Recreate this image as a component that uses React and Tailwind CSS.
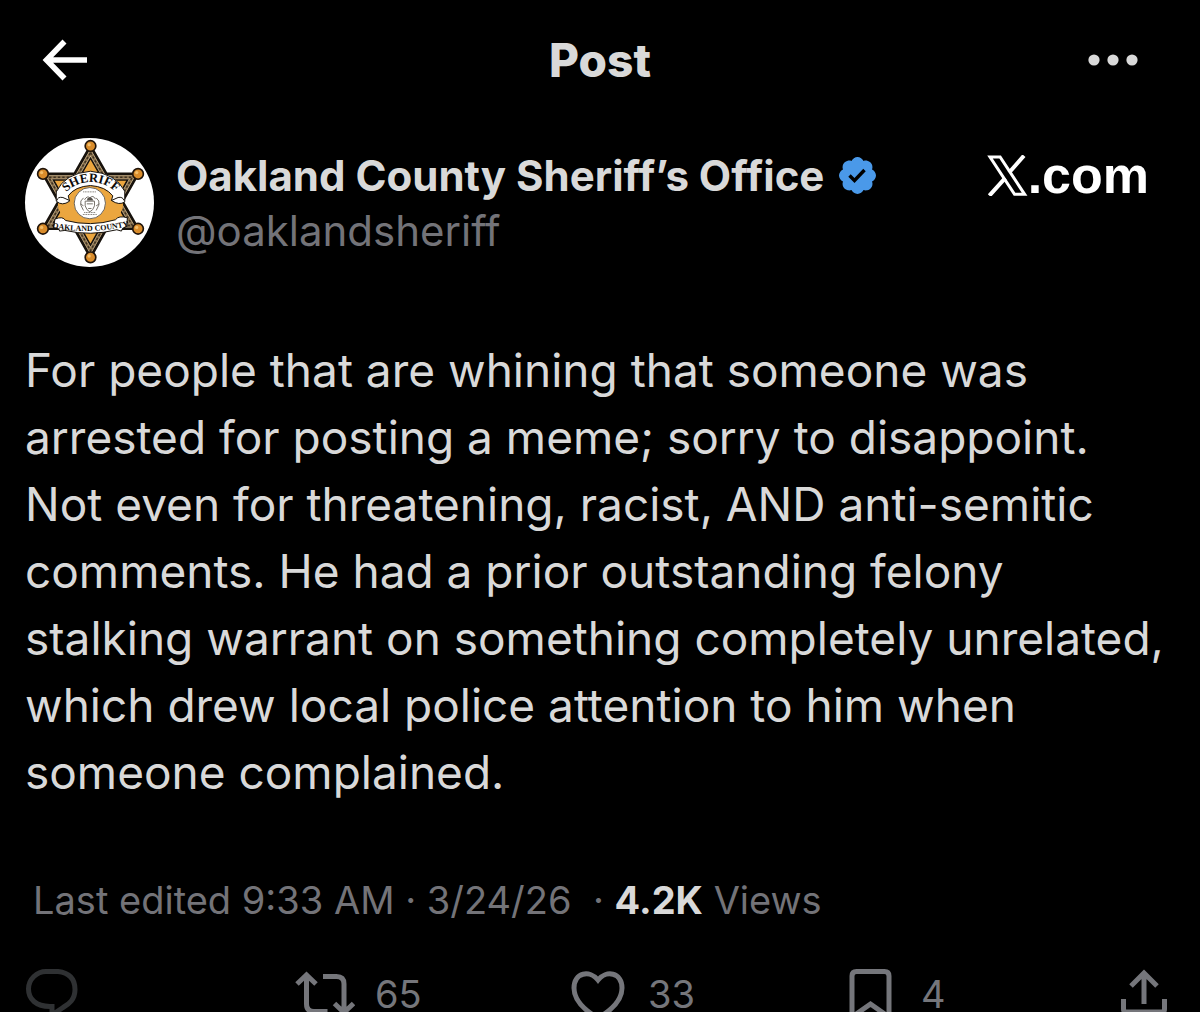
import clsx from 'clsx'

const POST = {
  name: 'Oakland County Sheriff’s Office',
  handle: '@oaklandsheriff',
  body: 'For people that are whining that someone was arrested for posting a meme; sorry to disappoint. Not even for threatening, racist, AND anti-semitic comments. He had a prior outstanding felony stalking warrant on something completely unrelated, which drew local police attention to him when someone complained.',
}

const STAR =
  '225,48 273,132 368,132 321,215 368,297 273,297 225,383 177,297 82,297 129,215 82,132 177,132'

const STAR_TIPS = [
  [225, 48],
  [368, 132],
  [368, 297],
  [225, 383],
  [82, 297],
  [82, 132],
]

function SheriffBadge() {
  return (
    <svg viewBox="28 24 388 388" className="size-[129px] shrink-0 rounded-full bg-white" role="img" aria-label="Sheriff badge">
      <defs>
        <path id="arc-top" d="M138 202 A108 108 0 0 1 314 202" />
        <path id="arc-bottom" d="M100 293 Q225 318 350 286" />
      </defs>
      <polygon points={STAR} fill="#dcc39a" stroke="#17120c" strokeWidth="8" strokeLinejoin="round" />
      <g transform="translate(225 215) scale(0.88) translate(-225 -215)">
        <polygon points={STAR} fill="none" stroke="#8a7350" strokeWidth="10" />
        <polygon points={STAR} fill="none" stroke="#3d3020" strokeWidth="5" strokeDasharray="8 7" />
      </g>
      <g transform="translate(225 215) scale(0.78) translate(-225 -215)">
        <polygon points={STAR} fill="#eba63f" stroke="#17120c" strokeWidth="6" />
      </g>
      <ellipse cx="225" cy="225" rx="98" ry="62" fill="#eba63f" />
      <path
        d="M122 186 Q148 130 225 124 Q300 130 328 184 L328 216 Q312 228 288 212 L292 198 Q270 170 225 167 Q178 170 158 198 L162 214 Q140 230 122 214 Z"
        fill="#fff"
        stroke="#17120c"
        strokeWidth="3"
      />
      <path d="M124 212 Q126 200 142 203 L162 212 M326 212 Q322 200 308 203 L288 212" fill="none" stroke="#17120c" strokeWidth="3" />
      <path
        d="M118 268 Q142 258 150 272 Q225 292 300 270 Q310 256 336 264 L334 290 Q318 294 318 304 L304 300 Q225 320 148 302 L132 304 Q132 294 114 294 Z"
        fill="#fff"
        stroke="#17120c"
        strokeWidth="3"
      />
      <circle cx="223" cy="220" r="47" fill="#fff" stroke="#6b6459" strokeWidth="3" />
      <g fill="none" stroke="#77736c" strokeWidth="3">
        <path d="M203 186h40M202 254h42M206 248h34" strokeDasharray="3 2" />
        <path d="M207 210q8-14 16-6q10-10 17 4M209 214h28v14q-4 14-14 18q-10-4-14-18zM214 222h18M218 236h10" />
        <path d="M204 204q-12 8-8 22l8 16M242 204q12 8 8 22l-8 16M194 222l10 6M252 222l-10 6" />
      </g>
      <path d="M216 206q8-8 14 0l4 6h-20z" fill="#55514b" />
      <g fill="#0d0b09" fontWeight="700" fontFamily='"Liberation Serif", serif' textAnchor="middle">
        <text fontSize="38">
          <textPath href="#arc-top" startOffset="50%">SHERIFF</textPath>
        </text>
        <text fontSize="24">
          <textPath href="#arc-bottom" startOffset="50%">OAKLAND COUNTY</textPath>
        </text>
      </g>
      {STAR_TIPS.map(([cx, cy]) => (
        <g key={`${cx}-${cy}`}>
          <circle cx={cx} cy={cy} r="16" fill="#d98c2b" stroke="#20140a" strokeWidth="5" />
          <circle cx={cx - 4} cy={cy - 4} r="5" fill="#f3bd68" />
        </g>
      ))}
    </svg>
  )
}

function VerifiedIcon() {
  return (
    <svg viewBox="0 0 37 37" className="size-[37px] shrink-0" role="img" aria-label="Verified account">
      <g transform="scale(1.968) translate(-1.6 -1.6)">
        <path
          fill="#4a99e9"
          d="M20.396 11c-.018-.646-.215-1.275-.57-1.816-.354-.54-.852-.972-1.438-1.246.223-.607.27-1.264.14-1.897-.131-.634-.437-1.218-.882-1.687-.47-.445-1.053-.75-1.687-.882-.633-.13-1.29-.083-1.897.14-.273-.587-.704-1.086-1.245-1.44S11.647 1.62 11 1.604c-.646.017-1.273.213-1.813.568s-.969.854-1.24 1.44c-.608-.223-1.267-.272-1.902-.14-.635.13-1.22.436-1.69.882-.445.47-.749 1.055-.878 1.688-.13.633-.08 1.29.144 1.896-.587.274-1.087.705-1.443 1.245-.356.54-.555 1.17-.574 1.817.02.647.218 1.276.574 1.817.356.54.856.972 1.443 1.245-.224.606-.274 1.263-.144 1.896.13.634.433 1.218.877 1.688.47.443 1.054.747 1.687.878.633.132 1.29.084 1.897-.136.274.586.705 1.084 1.246 1.439.54.354 1.17.551 1.816.569.647-.016 1.276-.213 1.817-.567s.972-.854 1.245-1.44c.604.239 1.266.296 1.903.164.636-.132 1.22-.447 1.68-.907.46-.46.776-1.044.908-1.681s.075-1.299-.165-1.903c.586-.274 1.084-.705 1.439-1.246.354-.54.551-1.17.569-1.816z"
        />
      </g>
      <path d="M10.500 18.500l5 5L25.500 13" fill="none" stroke="#000" strokeWidth="3.4" />
    </svg>
  )
}

function Action({ label, count, className, children }) {
  return (
    <button type="button" aria-label={label} className={clsx('flex h-[60px] items-center', className)}>
      <svg viewBox="0 0 60 60" className="size-[60px] shrink-0" fill="none" stroke="currentColor" strokeWidth="5" aria-hidden>
        {children}
      </svg>
      {count && <span className="pl-5 text-[38px] leading-9">{count}</span>}
    </button>
  )
}

export default function App() {
  return (
    <div className="flex h-screen flex-col overflow-hidden bg-black font-['Inter',sans-serif] text-[#d9d9d9]">
      <header className="grid h-[120px] shrink-0 grid-cols-[1fr_auto_1fr] items-center px-10">
        <button type="button" aria-label="Back" className="justify-self-start text-white">
          <svg viewBox="0 0 50 44" className="h-[44px] w-[50px]" fill="none" stroke="currentColor" strokeWidth="5.6" aria-hidden>
            <path d="M24.500 3.500L6.500 22l18 18.500M6 22h41" />
          </svg>
        </button>
        <h1 className="text-[46px] leading-[54px] font-extrabold">Post</h1>
        <button type="button" aria-label="More" className="justify-self-end pr-5">
          <svg viewBox="0 0 54 20" className="h-[20px] w-[54px]" fill="currentColor" aria-hidden>
            <circle cx="8" cy="10" r="5.600" />
            <circle cx="27" cy="10" r="5.600" />
            <circle cx="46" cy="10" r="5.600" />
          </svg>
        </button>
      </header>

      <main className="px-[25px]">
        <article>
          <div className="mt-[18px] flex items-start">
            <SheriffBadge />
            <div className="ml-[22px] pt-[10px]">
              <div className="flex items-center gap-[15px]">
                <h2 className="text-[42px] leading-[55px] font-bold whitespace-nowrap">{POST.name}</h2>
                <VerifiedIcon />
              </div>
              <p className="text-[42px] leading-[55px] text-[#737378]">{POST.handle}</p>
            </div>
            <a href="#x" aria-label="X.com" className="mt-[10px] mr-[26px] ml-auto flex items-center text-white">
              <svg viewBox="44 44 120 122" className="h-[41px] w-[41px]" fill="none" stroke="currentColor" aria-hidden>
                <path d="M52 50H82L155 161H125Z" strokeWidth="9" />
                <path d="M153 46L109 96M50 165L97 113" strokeWidth="12" />
              </svg>
              <span className="font-['Liberation_Sans',sans-serif] text-[52px] leading-[54px] font-bold">.com</span>
            </a>
          </div>

          <p className="mt-[70px] text-[46px] leading-[67px]">{POST.body}</p>

          <p className="mt-16 px-2 text-[38px] leading-[60px] text-[#737378]">
            Last edited 9:33 AM · 3/24/26 &nbsp;· <strong className="font-bold text-[#d9d9d9]">4.2K</strong> Views
          </p>
        </article>
      </main>

      <footer className="mt-[34px] grid shrink-0 grid-cols-[1fr_1fr_1fr_1fr_auto] pr-[26px] pl-[22px] text-[#75767b]">
        <Action label="Reply" className="text-[#2f3133]">
          <path d="M24 7.500h12q17 2 17 18c0 10-6 14.500-12 18L30 51v-8.500h-2C14 42.500 6.500 35 6.500 25S15 7.500 24 7.500z" />
        </Action>
        <Action label="Repost" count="65">
          <path d="M2 20L11.500 11 21 20M11.500 12v28q0 7.500 7.500 7.500h13.500M28 12.500h13.500q7.500 0 7.500 7.500v28M39.500 39.500L49 48.500 58.500 39.500" />
        </Action>
        <Action label="Like" count="33">
          <path d="M30 16C22 6 6 8 6 24c0 12 10 22 24 30 14-8 24-18 24-30C54 8 38 6 30 16z" />
        </Action>
        <Action label="Bookmark" count="4">
          <path d="M11 53V12q0-4.500 4.500-4.500h28q4.500 0 4.500 4.500v41L29.500 40z" />
        </Action>
        <Action label="Share">
          <path d="M17 22L30 9l13 13M30 9v31M9.500 35v10q0 3 3 3h35q3 0 3-3V35" />
        </Action>
      </footer>
    </div>
  )
}
